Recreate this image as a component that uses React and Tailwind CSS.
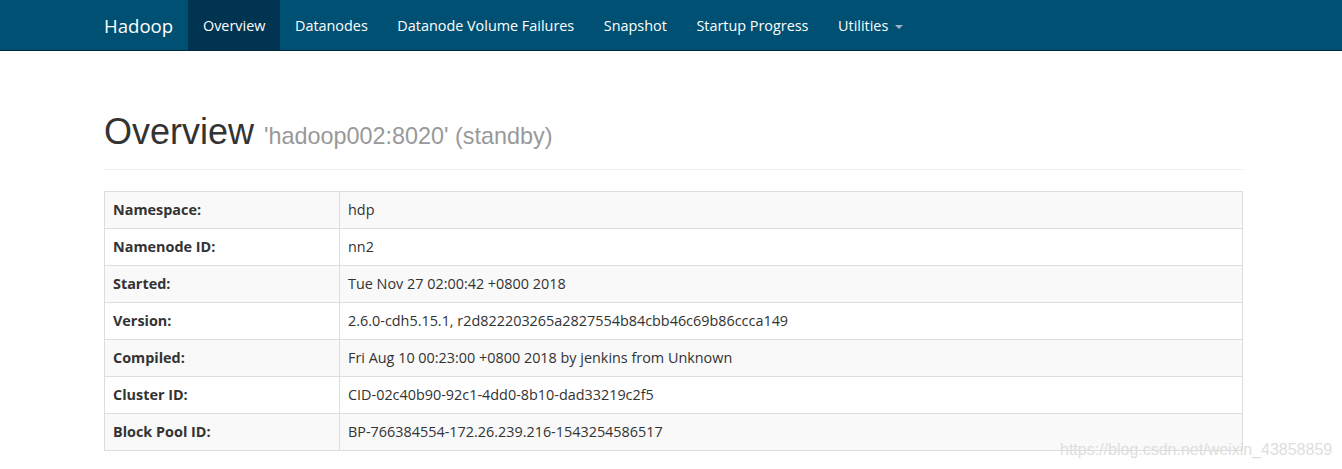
import React from "react";

const rows = [
  ["Namespace:", "hdp"],
  ["Namenode ID:", "nn2"],
  ["Started:", "Tue Nov 27 02:00:42 +0800 2018"],
  ["Version:", "2.6.0-cdh5.15.1, r2d822203265a2827554b84cbb46c69b86ccca149"],
  ["Compiled:", "Fri Aug 10 00:23:00 +0800 2018 by jenkins from Unknown"],
  ["Cluster ID:", "CID-02c40b90-92c1-4dd0-8b10-dad33219c2f5"],
  ["Block Pool ID:", "BP-766384554-172.26.239.216-1543254586517"],
];

const navItems = [
  "Datanodes",
  "Datanode Volume Failures",
  "Snapshot",
  "Startup Progress",
];

function App() {
  return (
    <div
      className="relative min-h-screen bg-white text-[#333] text-[14.4px]"
      style={{ fontFamily: '"Open Sans", "Noto Sans", sans-serif' }}
    >
      {/* Navbar */}
      <div className="h-[51px] bg-[#005073] border-b border-[#00283a]">
        <div className="ml-[88px] flex h-[50px] items-stretch pt-[2px]">
          <div className="flex items-center pl-[16px] pr-[15px] text-[18.6px] text-white">
            Hadoop
          </div>
          <div className="-mt-[2px] flex items-center bg-[#003451] px-[14.8px] pt-[2px] text-white">
            Overview
          </div>
          {navItems.map((item) => (
            <div key={item} className="flex items-center px-[14.8px] text-white">
              {item}
            </div>
          ))}
          <div className="flex items-center px-[14.8px] text-white">
            Utilities
            <span className="ml-[7px] mt-[2px] inline-block h-0 w-0 border-x-[4px] border-t-[4px] border-x-transparent border-t-[#9fb4c0]" />
          </div>
        </div>
      </div>

      {/* Main */}
      <div className="ml-[104px] w-[1139px]">
        <div
          className="mt-[59px] pb-[15px] border-b border-[#eee] flex items-baseline"
          style={{ fontFamily: '"Liberation Sans", Arial, sans-serif' }}
        >
          <h1 className="text-[36px] leading-[44px] text-[#333]">Overview</h1>
          <span className="ml-[10px] text-[23.4px] text-[#999]">
            'hadoop002:8020' (standby)
          </span>
        </div>

        <table className="mt-[21px] w-full border-collapse border border-[#ddd]">
          <tbody>
            {rows.map(([label, value], i) => (
              <tr
                key={label}
                className={i % 2 === 0 ? "bg-[#f9f9f9]" : "bg-white"}
              >
                <th className="h-[37px] w-[235px] border border-[#ddd] px-[8px] text-left font-bold">
                  {label}
                </th>
                <td className="h-[37px] border border-[#ddd] px-[8px]">
                  {value}
                </td>
              </tr>
            ))}
          </tbody>
        </table>
      </div>

      {/* watermark */}
      <div
        className="absolute left-[1060px] top-[440px] whitespace-nowrap text-[16px] leading-[20px] text-[#dedede]"
        style={{ fontFamily: '"Liberation Sans", Arial, sans-serif' }}
      >
        https://blog.csdn.net/weixin_43858859
      </div>
    </div>
  );
}

export default App;
